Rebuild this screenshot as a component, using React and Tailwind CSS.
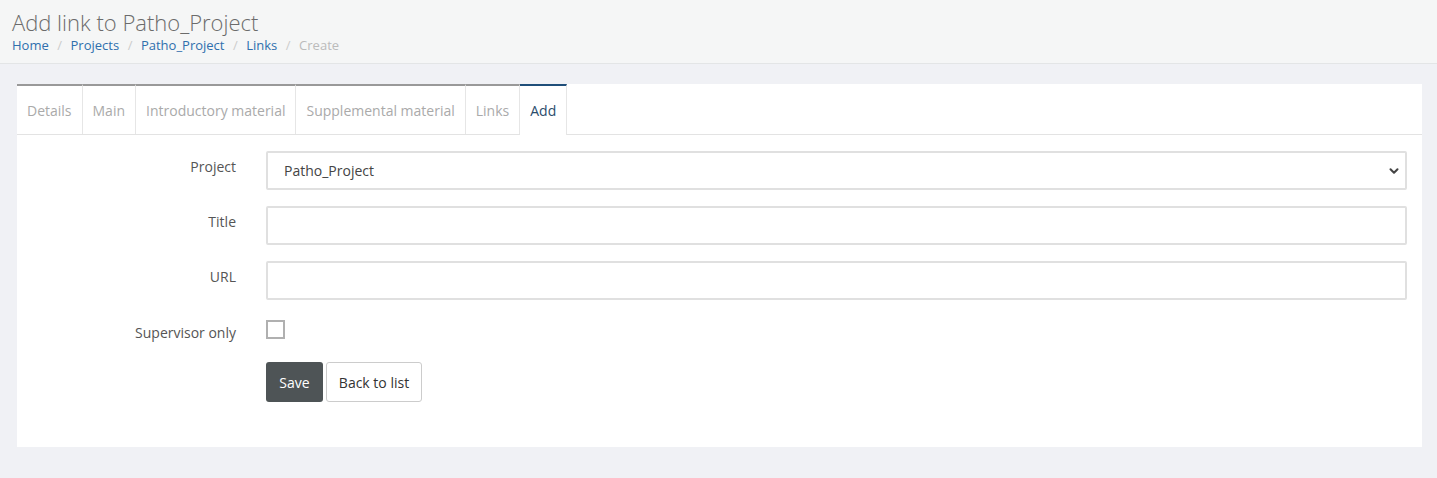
import { ChevronDown } from 'lucide-react'

const TABS = ['Details', 'Main', 'Introductory material', 'Supplemental material', 'Links', 'Add']
const CRUMBS = ['Home', 'Projects', 'Patho_Project', 'Links']

export default function App() {
  return (
    <div className="min-h-[478px] bg-[#f0f1f5] text-[14px] text-[#555]" style={{ fontFamily: '"Open Sans", "Noto Sans", Arial, sans-serif' }}>
      {/* Header */}
      <div className="h-[64px] bg-[#f5f6f6] border-b border-[#e3e5e6] px-[12px] pt-[6px]">
        <h1 className="text-[22px] font-light text-[#6b6b6b] leading-[32px]">Add link to Patho_Project</h1>
        <div className="flex items-center text-[13px] leading-[14px]">
          {CRUMBS.map(c => (
            <span key={c} className="flex items-center">
              <span className="text-[#2f6fad]">{c}</span>
              <span className="text-[#ccc] px-[8.5px]">/</span>
            </span>
          ))}
          <span className="text-[#bbb]">Create</span>
        </div>
      </div>

      <div className="px-[17px] pr-[15px] pt-[20px]">
        <div className="bg-white h-[363px]">
          {/* Tabs */}
          <div className="flex border-b border-[#e3e3e3] h-[51px]">
            {TABS.map(t => {
              const active = t === 'Add'
              return (
                <div
                  key={t}
                  className={`px-[10px] flex items-center border-t-2 border-r border-r-[#e6e6e6] text-[14px] ${active ? 'border-t-[#1f4e79] text-[#2b4c6b] bg-white h-[51px] -mb-px' : 'border-t-[#999] text-[#aaa]'}`}
                >
                  <span>{t}</span>
                </div>
              )
            })}
          </div>

          {/* Form */}
          <div className="pt-[16px] pr-[15px]">
            <div className="grid grid-cols-[249px_1fr] gap-y-[16px] items-start">
              <label className="text-right pr-[30px] pt-[5px] text-[14px] text-[#555]">Project</label>
              <div className="relative h-[39px] border-2 border-[#e0e0e0] rounded-[2px] flex items-center px-[16px] text-[14px] text-[#444]">
                Patho_Project
                <ChevronDown size={14} strokeWidth={3.5} className="absolute right-[4px] top-[11px] text-[#444]" />
              </div>

              <label className="text-right pr-[30px] pt-[5px]">Title</label>
              <div className="h-[39px] border-2 border-[#e0e0e0] rounded-[2px]" />

              <label className="text-right pr-[30px] pt-[5px]">URL</label>
              <div className="h-[39px] border-2 border-[#e0e0e0] rounded-[2px]" />

              <label className="text-right pr-[30px] pt-[6px]">Supervisor only</label>
              <div className="pt-[4px]">
                <div className="w-[19px] h-[19px] border-2 border-[#b0b0b0] bg-white" />
              </div>

              <div />
              <div className="flex gap-[3px] mt-[3px]">
                <button className="h-[40px] w-[57px] bg-[#4e5456] text-white rounded-[3px] text-[14px]">Save</button>
                <button className="h-[40px] w-[96px] bg-white border border-[#ccc] text-[#333] rounded-[3px] text-[14px]">Back to list</button>
              </div>
            </div>
          </div>
        </div>
      </div>
    </div>
  )
}
